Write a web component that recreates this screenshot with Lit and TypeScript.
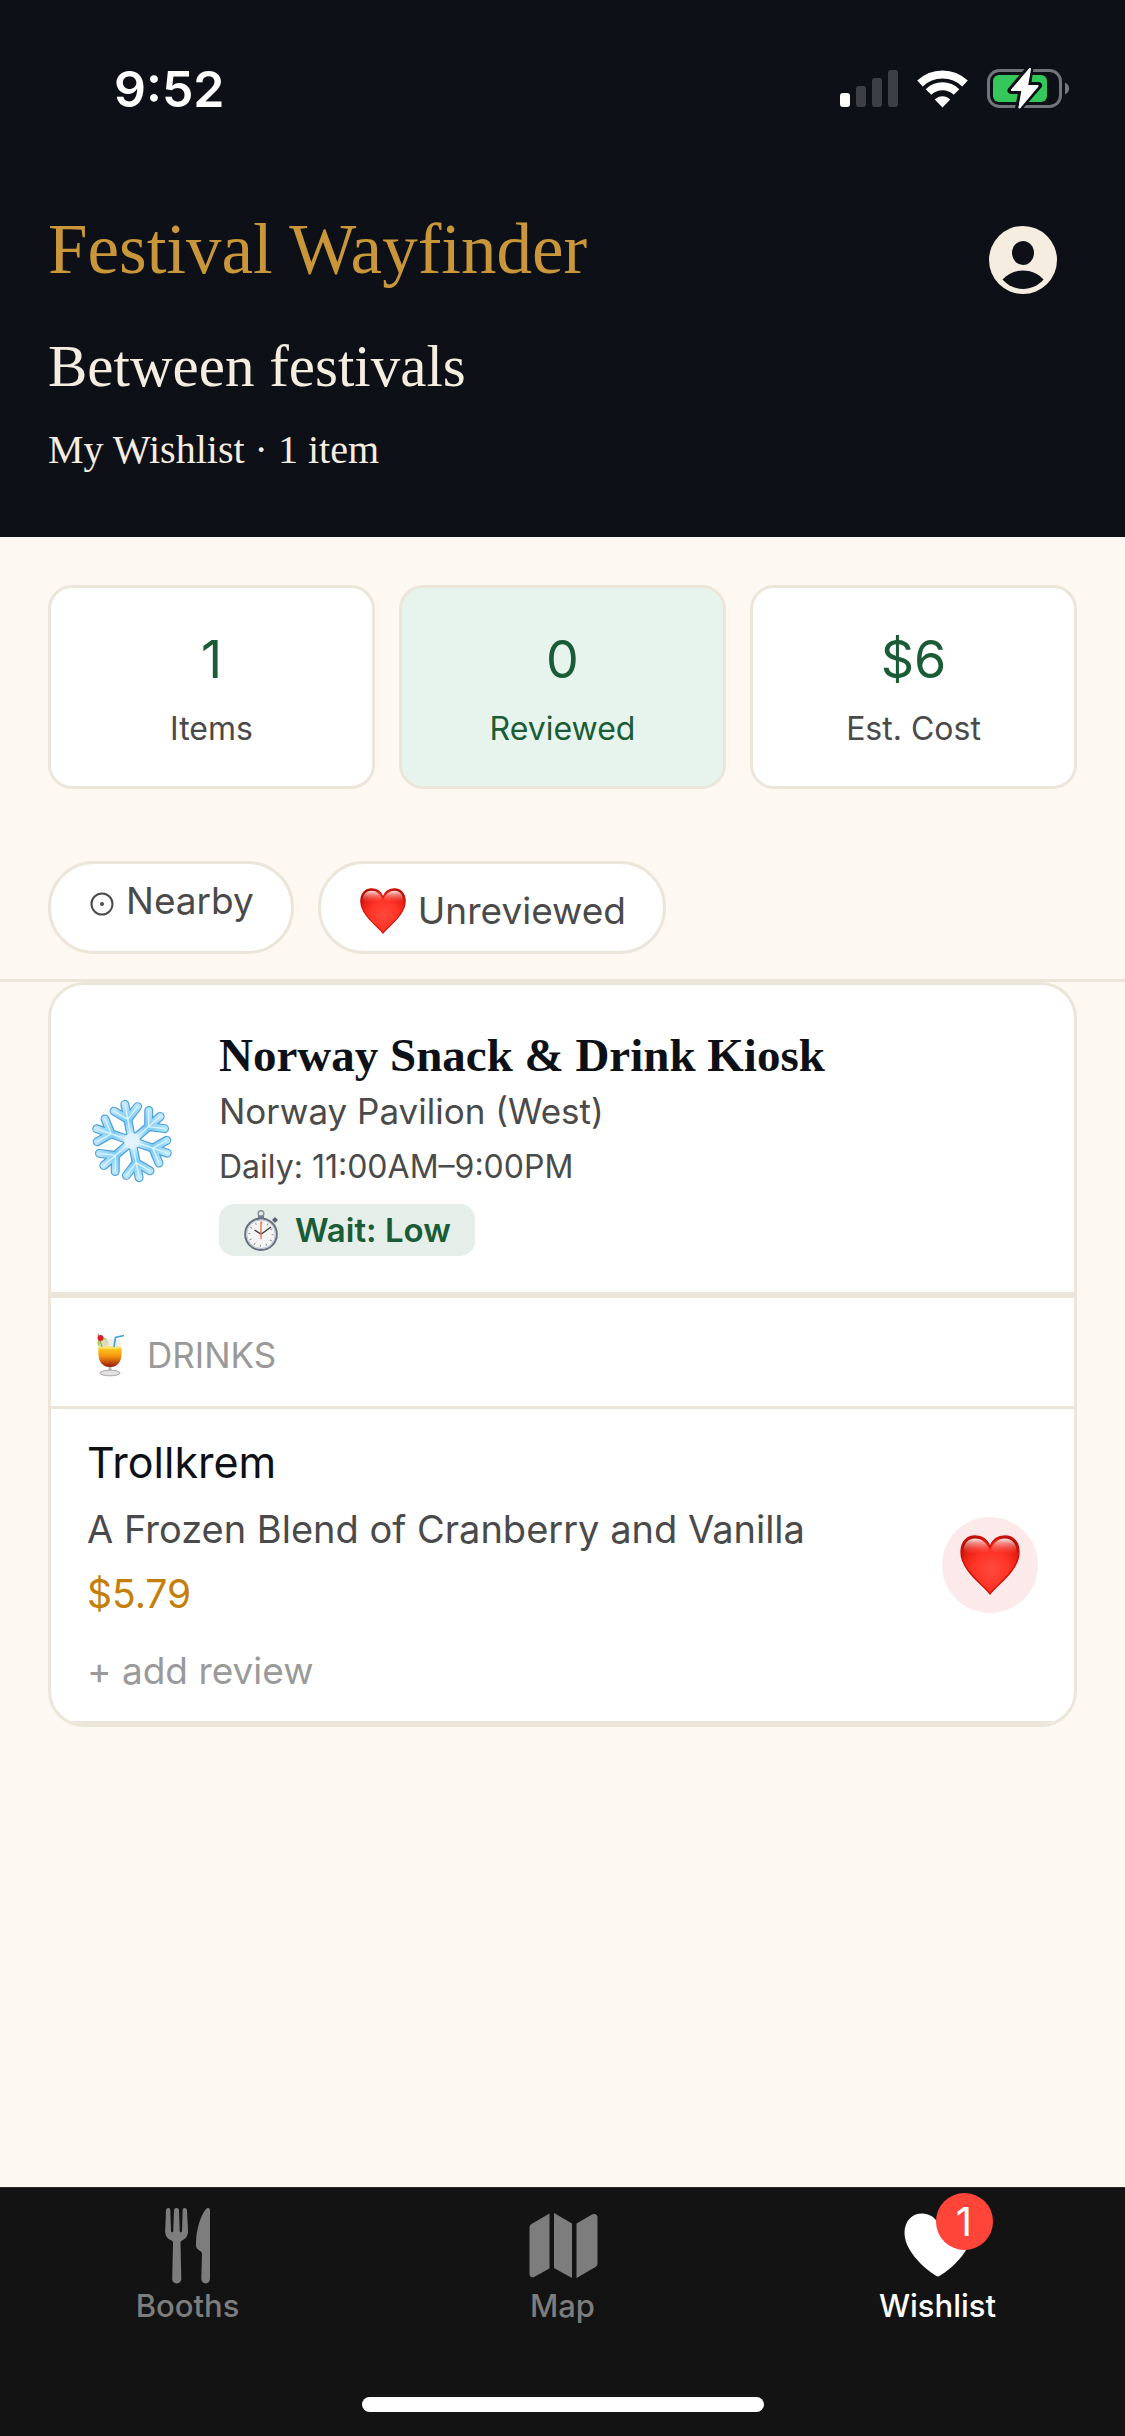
import { LitElement, html, css, svg } from "lit";
import { customElement, property } from "lit/decorators.js";
import { classMap } from "lit/directives/class-map.js";

const heart = (id: string) => html`
  <svg class="heart" viewBox="0 0 60 60" aria-hidden="true">
    <defs>
      <radialGradient id=${id} cx="0.52" cy="0.58" r="0.62">
        <stop offset="0" stop-color="#ff4a3c"></stop>
        <stop offset="0.5" stop-color="#ff3427"></stop>
        <stop offset="0.8" stop-color="#ea2015"></stop>
        <stop offset="1" stop-color="#b30d08"></stop>
      </radialGradient>
      <linearGradient id=${id + "-shine"} x1="0" y1="0" x2="0" y2="1">
        <stop offset="0" stop-color="#fff" stop-opacity="0.9"></stop>
        <stop offset="1" stop-color="#ff5a4c" stop-opacity="0"></stop>
      </linearGradient>
    </defs>
    <path fill="url(#${id})" stroke="#cf1209" stroke-width="1.4"
      d="M30 59C25 51 1 36 1 17C1 7 7 1 15 1C23 1 28 6 30 12C32 6 37 1 45 1C53 1 59 7 59 17C59 36 35 51 30 59Z"></path>
    <path fill="url(#${id + "-shine"})"
      d="M3.500 19C2.500 9 8 3.500 15 3.500C22 3.500 27 8 29 15C24 19 10 17 3.500 19ZM56.500 19C57.500 9 52 3.500 45 3.500C38 3.500 33 8 31 15C36 19 50 17 56.500 19Z"></path>
  </svg>`;

const arm = "M0 0V-112M0 -66L-36 -98M0 -66L36 -98";
const arms = (width: number, color: string) => svg`
  <g fill="none" stroke=${color} stroke-width=${width} stroke-linecap="round" stroke-linejoin="round">
    ${[-11, 49, 109, 169, 229, 289].map((a) => svg`<path transform="rotate(${a})" d=${arm}></path>`)}
  </g>`;

const snowflake = html`
  <svg class="snow" viewBox="-126 -126 252 252" aria-hidden="true">
    <defs>
      <radialGradient id="ice" gradientUnits="userSpaceOnUse" cx="0" cy="0" r="120">
        <stop offset="0" stop-color="#f2f9ff"></stop>
        <stop offset="0.2" stop-color="#bfe6fb"></stop>
        <stop offset="0.5" stop-color="#7ccdf8"></stop>
        <stop offset="0.75" stop-color="#9cdafa"></stop>
        <stop offset="1" stop-color="#c8ebfd"></stop>
      </radialGradient>
    </defs>
    ${arms(27, "#4d9fdb")}
    ${arms(20, "url(#ice)")}
    ${arms(4, "#dff3fe")}
    <circle r="24" fill="#e3f3fd" opacity="0.85"></circle>
  </svg>`;

const stopwatch = html`
  <svg class="stopwatch" viewBox="0 0 36 41" aria-hidden="true">
    <circle cx="18" cy="3.6" r="2.8" fill="none" stroke="#8a9099" stroke-width="1.5"></circle>
    <path d="M15 5.5h6v4h-6z" fill="#777e88"></path>
    <path d="M29 10l3-3 3 3-3 3z" fill="#59616e"></path>
    <circle cx="18" cy="24.2" r="15.8" fill="#f4f4f5" stroke="#66707e" stroke-width="2"></circle>
    <circle cx="18" cy="24.2" r="14.3" fill="none" stroke="#b9c4d1" stroke-width="1"></circle>
    <circle cx="18" cy="24.2" r="11.6" fill="none" stroke="#8d8d90" stroke-width="2" stroke-dasharray="1 5.07"></circle>
    <path d="M18 24.2L11.5 20M18 24.2L28 17" stroke="#3a3a3c" stroke-width="1.4"></path>
    <path d="M18 29V11.5" stroke="#f0714b" stroke-width="1.4"></path>
  </svg>`;

const cocktail = html`
  <svg class="cocktail" viewBox="0 0 28 44" aria-hidden="true">
    <defs>
      <linearGradient id="juice" x1="0" y1="0" x2="0" y2="1">
        <stop offset="0" stop-color="#ffcf1f"></stop>
        <stop offset="0.45" stop-color="#f59410"></stop>
        <stop offset="1" stop-color="#98180a"></stop>
      </linearGradient>
    </defs>
    <circle cx="6" cy="10" r="5.5" fill="#9ccf3c"></circle>
    <path d="M3 6.5h20l1.500 10H1.500z" fill="#e9e6e2" opacity="0.75"></path>
    <path d="M1.500 14.500C0.500 26 3 34 13 34S25.500 26 24.500 14.500Z" fill="url(#juice)"></path>
    <ellipse cx="13" cy="14.500" rx="11.500" ry="1.500" fill="#ffe276"></ellipse>
    <path d="M17 14L18.500 4.500L27 2.500" fill="none" stroke="#41a4dd" stroke-width="1.700"></path>
    <path d="M1 0.500L5 14" stroke="#b77a58" stroke-width="1"></path>
    <circle cx="3.500" cy="5" r="3" fill="#d8202a"></circle>
    <path d="M11.500 34h3v5h-3z" fill="#bdb9b5"></path>
    <ellipse cx="13" cy="40" rx="10" ry="2.800" fill="#e4e2df" stroke="#aaa7a3" stroke-width="1"></ellipse>
  </svg>`;

@customElement("status-bar")
class StatusBar extends LitElement {
  static styles = css`
    :host {
      display: flex;
      justify-content: space-between;
      align-items: flex-start;
      padding: 57px 54px 0 114px;
      color: #fff;
      font: 600 50px/64px Inter, "Liberation Sans", sans-serif;
    }
    .icons { width: 232px; height: 44px; margin-top: 10px; }
  `;
  render() {
    return html`
      <span>9:52</span>
      <svg class="icons" viewBox="839 67 232 44" role="img" aria-label="Signal, Wi-Fi, battery charging">
        <rect x="840" y="93" width="10" height="14" rx="3" fill="#fff"></rect>
        <g fill="#3d3f45">
          <rect x="856" y="86" width="10" height="21" rx="3"></rect>
          <rect x="872" y="78" width="10" height="29" rx="3"></rect>
          <rect x="888" y="70" width="10" height="37" rx="3"></rect>
        </g>
        <g fill="none" stroke="#fff">
          <path d="M920 83.500A32.500 32.500 0 0 1 965 83.500" stroke-width="8"></path>
          <path d="M928.500 92A20 20 0 0 1 956.500 92" stroke-width="8"></path>
        </g>
        <path d="M942.500 107.500L934.800 99.500C939 95 946 95 950.200 99.500Z" fill="#fff"></path>
        <rect x="988.500" y="70.500" width="72" height="36" rx="11" fill="none" stroke="#737479" stroke-width="3"></rect>
        <path d="M1065 82.500C1070.500 85 1070.500 92 1065 94.500Z" fill="#77787d"></path>
        <rect x="993" y="75" width="54" height="27" rx="6" fill="#34c759"></rect>
        <path d="M1030 68L1011 90.500H1022L1018.500 108.500L1038.500 85.500H1027.500Z" fill="#fff" stroke="#0d1117"
          stroke-width="7" stroke-linejoin="round" paint-order="stroke"></path>
        <path d="M1030 69L1012 90H1022.500L1019.500 107.500L1037.500 86H1027Z" fill="#fff" stroke="#fff"
          stroke-width="2" stroke-linejoin="round"></path>
      </svg>`;
  }
}

@customElement("stat-card")
class StatCard extends LitElement {
  @property() value = "";
  @property() label = "";
  static styles = css`
    :host {
      display: flex;
      flex-direction: column;
      align-items: center;
      gap: 17px;
      padding: 40px 12px 37px;
      border: 3px solid #ece6da;
      border-radius: 24px;
      background: #fff;
      color: #4a4a4a;
      font: 400 32px/40px Inter, "Liberation Sans", sans-serif;
    }
    :host([active]) { background: #e7f4ed; color: #1a5c36; }
    .value { font-size: 52px; line-height: 64px; color: #1a5c36; }
  `;
  render() {
    return html`<span class="value">${this.value}</span><span>${this.label}</span>`;
  }
}

@customElement("booth-card")
class BoothCard extends LitElement {
  static styles = css`
    :host {
      display: block;
      overflow: hidden;
      border: 3px solid #ece6da;
      border-radius: 36px;
      background: #fff;
      color: #4a4a4a;
      font: 400 35px/44px Inter, "Liberation Sans", sans-serif;
    }
    h2, h3, p { margin: 0; font-weight: 400; }
    button { padding: 0; border: 0; background: none; color: inherit; font: inherit; }
    .booth {
      display: flex;
      align-items: center;
      gap: 45px;
      padding: 40px 39px 36px;
      border-bottom: 6px solid #ece6da;
    }
    .snow { width: 84px; height: 84px; flex: none; }
    .name { font: 700 47px/60px "Liberation Serif", serif; color: #0d1117; }
    .place { margin-top: 4px; }
    .hours { margin-top: 14px; font-size: 32px; line-height: 40px; }
    .wait {
      display: flex;
      align-items: center;
      gap: 16px;
      width: fit-content;
      margin-top: 17px;
      padding: 0 24px;
      border-radius: 15px;
      background: #e5eee9;
      color: #1a5c36;
      font-size: 33px;
      font-weight: 600;
      line-height: 52px;
    }
    .stopwatch { width: 36px; height: 41px; }
    .section {
      display: flex;
      align-items: center;
      gap: 22px;
      padding: 35px 46px 29px;
      border-bottom: 3px solid #ece6da;
      color: #999;
    }
    .cocktail { width: 28px; height: 44px; }
    .item {
      display: flex;
      align-items: center;
      justify-content: space-between;
      padding: 25px 36px 26px;
      border-bottom: 3px solid #ece6da;
    }
    .title { font-size: 43px; line-height: 56px; color: #0d1117; }
    .desc { margin-top: 15px; font-size: 38px; line-height: 48px; }
    .price { margin-top: 17px; font-size: 39px; line-height: 48px; color: #c47f0a; }
    .review { display: block; margin-top: 29px; font-size: 37px; line-height: 48px; color: #9a9a9a; }
    .item .fav {
      display: grid;
      place-items: center;
      flex: none;
      width: 96px;
      height: 96px;
      border-radius: 50%;
      background: #fceaea;
    }
    .heart { width: 60px; height: 60px; }
  `;
  render() {
    return html`
      <div class="booth">
        ${snowflake}
        <div>
          <h2 class="name">Norway Snack &amp; Drink Kiosk</h2>
          <p class="place">Norway Pavilion (West)</p>
          <p class="hours">Daily: 11:00AM–9:00PM</p>
          <span class="wait">${stopwatch}<span>Wait: Low</span></span>
        </div>
      </div>
      <div class="section">${cocktail}<span>DRINKS</span></div>
      <div class="item">
        <div>
          <h3 class="title">Trollkrem</h3>
          <p class="desc">A Frozen Blend of Cranberry and Vanilla</p>
          <p class="price">$5.79</p>
          <button class="review">+ add review</button>
        </div>
        <button class="fav" aria-label="Remove from wishlist">${heart("fav")}</button>
      </div>`;
  }
}

@customElement("tab-bar")
class TabBar extends LitElement {
  static styles = css`
    :host {
      display: block;
      padding-bottom: 24px;
      border-top: 1px solid #2c2c2c;
      background: #131313;
      font: 500 31px/36px Inter, "Liberation Sans", sans-serif;
    }
    .tabs { display: grid; grid-template-columns: repeat(3, 1fr); padding-top: 20px; }
    .tab {
      display: flex;
      flex-direction: column;
      align-items: center;
      gap: 2px;
      color: #7d7d7d;
      text-decoration: none;
    }
    .active { color: #fff; }
    .icon { position: relative; width: 78px; height: 78px; }
    .icon svg { display: block; width: 78px; height: 78px; fill: currentColor; }
    .badge {
      position: absolute;
      top: -15px;
      left: 37px;
      width: 57px;
      height: 57px;
      border-radius: 50%;
      background: #ff453a;
      color: #fff;
      font-size: 40px;
      font-weight: 400;
      line-height: 57px;
      text-align: center;
    }
    .home { width: 402px; height: 15px; margin: 73px auto 0; border-radius: 8px; background: #fff; }
  `;
  render() {
    const tabs = [
      {
        label: "Booths",
        icon: svg`
          <path d="M19.500 0C21 0 21.300 1 21.300 2.500L22 22.500C22 25 24.300 25 24.300 22.500L25 2.500C25 1 25.500 0 27.500 0C29.500 0 30 1 30 2.500L30.700 22.500C30.700 25 33 25 33 22.500L33.700 2.500C33.700 1 34 0 35.500 0C37 0 38 1 38 2.500L39 23C39.200 29 35 31.500 33 32.500C32 33 31.500 33.500 31.500 35L32.300 70.500C32.300 77 23.200 77 23.200 70.500L24 35C24 33.500 23.500 33 22.500 32.500C20 31.500 16 29 16.200 23L17 2.500C17 1 17.800 0 19.500 0Z"></path>
          <path d="M59 0C60.500 0 61 1 61 2.500V70.500C61 77 52.300 77 52.300 70.500L53 46C53 43 50 43 48 40.500C47 39 46.800 37 47 34C47.500 20 52 7 57 1C57.500 0.300 58.300 0 59 0Z"></path>`,
      },
      {
        label: "Map",
        icon: svg`
          <path d="M25.500 5.500V60.500L10 69C7.500 70 5.500 68.500 5.500 66V20C5.500 18 6 17 7.500 16Z"></path>
          <path d="M30 5L48 15.500V70L30 60Z"></path>
          <path d="M52.500 15.500L68 6.500C71 5 73.500 6.500 73.500 9.500V55C73.500 57 73 58 71.500 59L52.500 70Z"></path>`,
      },
      {
        label: "Wishlist",
        badge: "1",
        icon: svg`<path d="M39 68.500C36 68.500 5.500 47 5.500 25C5.500 13 13 5.500 23 5.500C30 5.500 35.500 9 39 15C42.500 9 48 5.500 55 5.500C65 5.500 72.500 13 72.500 25C72.500 47 42 68.500 39 68.500Z"></path>`,
      },
    ];
    return html`
      <nav class="tabs">
        ${tabs.map(
          (t) => html`
            <a class=${classMap({ tab: true, active: !!t.badge })} href="#${t.label.toLowerCase()}">
              <span class="icon">
                <svg viewBox="0 0 78 78" aria-hidden="true">${t.icon}</svg>
                ${t.badge ? html`<span class="badge">${t.badge}</span>` : null}
              </span>
              <span>${t.label}</span>
            </a>`
        )}
      </nav>
      <div class="home"></div>`;
  }
}

@customElement("app-root")
class AppRoot extends LitElement {
  static styles = css`
    :host {
      display: flex;
      flex-direction: column;
      min-height: 100vh;
      background: #fdf8f1;
      font-family: Inter, "Liberation Sans", sans-serif;
    }
    header {
      background: #0d1117;
      color: #f5ede0;
      font-family: "Liberation Serif", serif;
    }
    .top { display: flex; justify-content: space-between; padding: 84px 66px 63px 48px; }
    h1, .season, .summary { margin: 0; font-weight: 400; }
    h1 { font-size: 71px; line-height: 88px; color: #c9973a; }
    .season { margin-top: 37px; font-size: 59px; line-height: 72px; }
    .summary { margin-top: 24px; font-size: 40px; line-height: 48px; }
    .account { width: 72px; height: 72px; margin-top: 19px; padding: 0; border: 0; background: none; }
    .account svg { display: block; width: 72px; height: 72px; }
    main { flex: 1; }
    .stats { display: grid; grid-template-columns: repeat(3, 1fr); gap: 24px; padding: 48px 48px 72px; }
    .filters { display: flex; gap: 24px; padding: 0 48px 25px; border-bottom: 3px solid #ece6da; }
    .chip {
      display: flex;
      align-items: flex-start;
      gap: 12px;
      padding: 13px 37px 6px 39px;
      border: 3px solid #ece6da;
      border-radius: 46px;
      background: #fff;
      color: #4a4a4a;
      font: 400 37px/48px Inter, "Liberation Sans", sans-serif;
    }
    .near { width: 24px; height: 48px; }
    .content { display: flex; align-items: center; gap: 12px; height: 68px; }
    .heart { width: 46px; height: 46px; }
    .list { padding: 0 48px 48px; }
  `;
  render() {
    return html`
      <header>
        <status-bar></status-bar>
        <div class="top">
          <div>
            <h1>Festival Wayfinder</h1>
            <p class="season">Between festivals</p>
            <p class="summary">My Wishlist · 1 item</p>
          </div>
          <button class="account" aria-label="Account">
            <svg viewBox="0 0 72 72" aria-hidden="true">
              <circle cx="36" cy="36" r="34" fill="#f5ede0"></circle>
              <ellipse cx="36" cy="29" rx="11" ry="12" fill="#0d1117"></ellipse>
              <path d="M15.500 55.500C26 43.500 46 43.500 56.500 55.500C46 68 26 68 15.500 55.500Z" fill="#0d1117"></path>
            </svg>
          </button>
        </div>
      </header>
      <main>
        <div class="stats">
          <stat-card value="1" label="Items"></stat-card>
          <stat-card value="0" label="Reviewed" active></stat-card>
          <stat-card value="$6" label="Est. Cost"></stat-card>
        </div>
        <div class="filters">
          <button class="chip">
            <svg class="near" viewBox="0 0 24 48" aria-hidden="true">
              <circle cx="12" cy="27" r="10.500" fill="none" stroke="#4a4a4a" stroke-width="2"></circle>
              <circle cx="12" cy="27" r="2" fill="#4a4a4a"></circle>
            </svg>
            <span>Nearby</span>
          </button>
          <button class="chip"><span class="content">${heart("chip")}<span>Unreviewed</span></span></button>
        </div>
        <div class="list"><booth-card></booth-card></div>
      </main>
      <tab-bar></tab-bar>`;
  }
}
